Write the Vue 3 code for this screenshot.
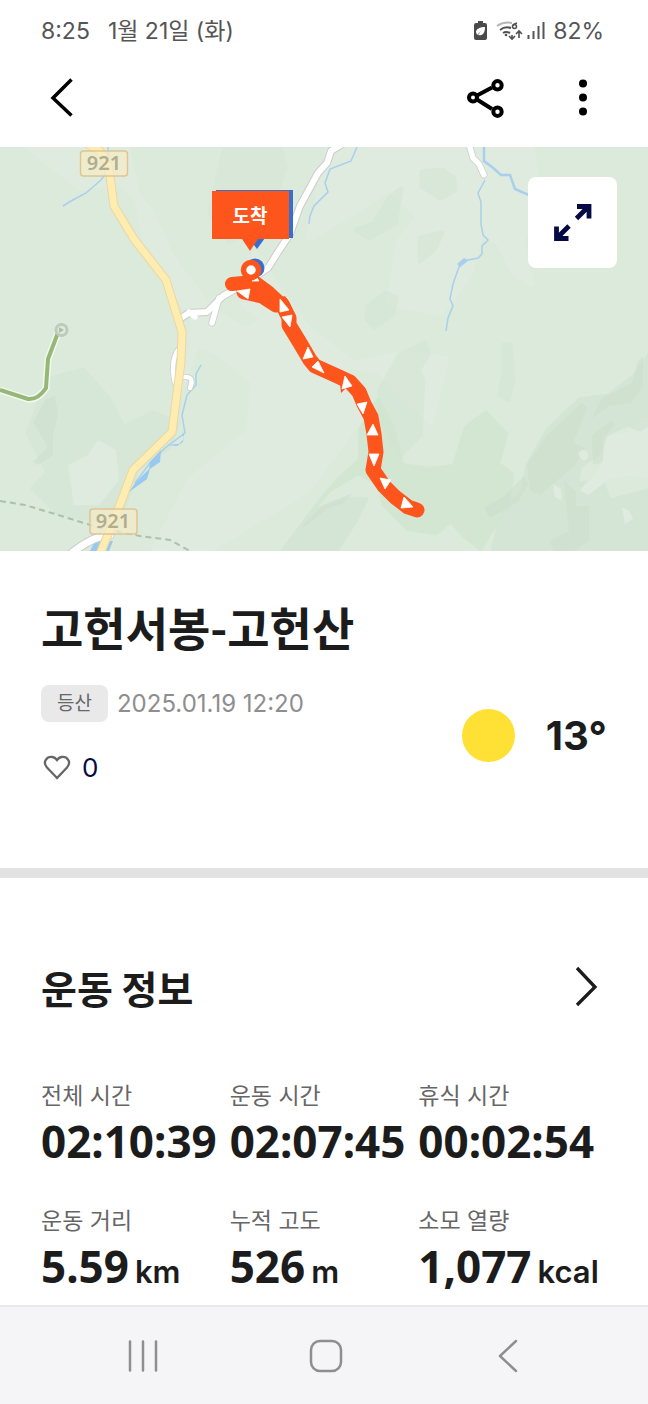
<script setup>
const stats = [
  { label: '전체 시간', value: '02:10:39', unit: '' },
  { label: '운동 시간', value: '02:07:45', unit: '' },
  { label: '휴식 시간', value: '00:02:54', unit: '' },
  { label: '운동 거리', value: '5.59', unit: 'km' },
  { label: '누적 고도', value: '526', unit: 'm' },
  { label: '소모 열량', value: '1,077', unit: 'kcal' },
]
</script>

<template>
  <div class="page">
    <div class="status">
      <div class="status-left"><span>8:25</span><span>1월 21일 (화)</span></div>
      <div class="status-right">
        <svg width="74" height="24" viewBox="472 20 74 24" aria-hidden="true">
          <path d="M478 22h5v2h2q2 0 2 2v13q0 2-2 2h-9q-2 0-2-2V26q0-2 2-2h2z" fill="#4a4a4a" />
          <path d="M485 28c-5 0-9 2-9 5 0 1 1 2 1 3l4-4-3 4c4 1 7-1 7-8z" fill="#fff" />
          <g fill="none" stroke-width="2">
            <path d="M497 27q7-5 15-3" stroke="#b5b5b5" />
            <path d="M500 31q5-4 11-2M503 34q3-2 7 0" stroke="#505050" />
            <path d="M517 24q-4 1-4 3M512 36v4M509 37l3 3 3-3M519 39v-7M516 35l3-3 3 3" stroke="#505050" stroke-width="1.6" />
            <circle cx="514.500" cy="27.500" r="2" stroke="#505050" stroke-width="1.500" />
            <path d="M528.500 36v4M533.500 32v8M538.500 27v13M543.500 23v17" stroke="#555" />
          </g>
          <circle cx="506" cy="36" r="1.300" fill="#505050" />
        </svg>
        <span>82%</span>
      </div>
    </div>

    <header class="appbar">
      <button class="icon-btn" aria-label="뒤로">
        <svg width="40" height="44" viewBox="41 76 40 44"><path d="M71.500 79.500 53 98l18.500 17.500" fill="none" stroke="#000" stroke-width="3.500" /></svg>
      </button>
      <div class="actions">
        <button class="icon-btn" aria-label="공유">
          <svg width="40" height="44" viewBox="466 76 40 44">
            <g fill="none" stroke="#000" stroke-width="4"><path d="m477 95.500 15-8M477 99.500l15 9.500" /><circle cx="473" cy="97.500" r="4" /><circle cx="497.500" cy="85.300" r="4.200" /><circle cx="497.500" cy="111.700" r="4.200" /></g>
          </svg>
        </button>
        <button class="icon-btn" aria-label="더보기">
          <svg width="40" height="44" viewBox="563 76 40 44"><circle cx="583" cy="83.500" r="4" /><circle cx="583" cy="97.500" r="4" /><circle cx="583" cy="111.500" r="4" /></svg>
        </button>
      </div>
    </header>

    <main>
      <section class="map" aria-label="운동 경로">
        <svg viewBox="0 147 648 404" preserveAspectRatio="xMidYMid slice">
          <rect y="147" width="648" height="404" fill="#dbeada" />
          <!-- terrain shading -->
          <g fill="#dfebdf" stroke="#dfebdf" stroke-width="8" stroke-linejoin="round">
            <path d="M30 147h95l15 60 8 45 45 65 2 30-20 55 20-60 25 10 35 30-5 50-60 50-35 69h50l100-60 60-80-30-60-50-40-40 20-35-20-40-55-20-45-30-30-40 5z" />
            <path d="M330 147h200l10 55-20 40 10 40-15-10-15-30-20-10-10 40-30 40-50-10 10-60 20-25-30-30-30 20-50 30z" />
            <path d="M255 255l55 80 45 30 45-10 45 5-15 60-50-50-60-10-45-35-30-20z" />
            <path d="M610 440l20-5 18-15v55l-40-10z" />
          </g>
          <g fill="#d6e6d6" stroke="#d6e6d6" stroke-width="5" stroke-linejoin="round">
            <path d="M48 380l35-10 25 28 15 30 30-15 25 10-10 25-30 20-20 55-60-10-25-25 15-15-20-40z" opacity=".7" />
            <path d="M225 147h55l5 20-15 45-40 30-20-30z" opacity=".5" />
            <path d="M422 172l20-2 12 8 1 12-15 8-18-12zM420 238l22-5-8 16-14 12z" opacity=".7" />
            <path d="M356 230l18-6 15-25 12-10-6 34-25 15zM368 307l18-14 10 5-3 16-18 13-8-8zM504 345h6l3 35-5 20-8-6 4-20z" opacity=".7" />
            <path d="M380 420v-30l20-35 25-12 3 12-10 15 5 10-3 55-20 20z" opacity=".7" />
          </g>
          <g fill="#cfe5d0" stroke="#cfe5d0" stroke-width="4" stroke-linejoin="round" opacity=".75">
            <path d="M313 510l25-30 22-20 0-30 18-30 14 25 10 40 28 4 24-3 12-39 20-14 20 21-8 30 14 10-5 37-16 20-10 18-18-14-12-14-15 12-28-4-24-24-6-22-20-10-30 18z" />
          </g>
          <g fill="#d3e4d4" stroke="#d3e4d4" stroke-width="3" stroke-linejoin="round">
            <path d="M527 465l20-35 32-31 30-4 25-20 14-20v70l-8 5-12-5-22 10-6 18-20 14-2 16 24-3 8 20 38-10v61h-156l10-42 20-16z" opacity=".75" />
            <path d="M282 551l30-40 35-12h20l-10 20-20 32z" opacity=".8" />
          </g>
          <g fill="#c9dccb" opacity=".4">
            <path d="M527 465l20-30 35-32 5 5-14 35 12 5-10 17-35 30-10-5z" />
            <path d="M484 508l20-12 20-20 4 8-10 18-28 16zM564 481l12 10v15h13v35l-15 10h-20l-5-10 20-10z" />
            <path d="M303 525l20-20 30-12-10 10-15 5-25 20z" />
            <path d="M45 400l10-5 3 20-5 20v20l-15 10-5-3 15-15-15-25z" />
            <path d="M592 418l10-20 30-15 6-22 5-5v30l-12 17-22 3zM592 435l20-15 3 5-12 13v25l-10 1z" />
          </g>
          <g fill="#dfebdf">
            <path d="M580 490l18-20 10-20 20-10 20 25-15 10-25 5-20 15zM553 484l8 5 1 12-7-4zM622 507l7 4 4 8-8 5zM578 454q5-8 10 0 0 8-6 6z" />
            <path d="M68 465l20-10 10-15 18 10 3 30-20 25-25 0z" />
          </g>
          <!-- streams -->
          <g fill="none" stroke="#a8d0ec" stroke-width="1.500">
            <path d="M108 147q2 24-7 33l-15 13-15 8-8 5" />
            <path d="M357 147l-6 14-21 8-5 14 3 9-14 14-4 10-1 8" />
            <path d="M485 180l-7 13 3 9 0 22 2 11 5 5-6 6 0 8-4 4-10 2-9 7-6 17-3 15 3 7-5 12-2 13" />
            <path d="M201 365l-5 9 0 11-9 10-5 20 3 18-20 15-15 15-15 20" />
          </g>
          <path d="M484 147l0 14 8 6 9 8 9 0 5 14 14 6 11 9" fill="none" stroke="#a8d0ec" stroke-width="2.500" />
          <path d="M182 431l2 8-5 5-12 1 10 1 6-4 1-7zM161 450l-11 12-1 7-13 13-7 10 18-13 3-10 10-7zM109 551l4-10-7 0-10-2-6 12z" fill="#99c9ee" />
          <path d="M460 267l8-7-4-2-7 6z" fill="#a8d0ec" />
          <!-- minor roads -->
          <g fill="none" stroke-linejoin="round" stroke-linecap="round">
            <g stroke="#cacdca">
              <path d="M344 143l-13 8-4 12-9 10-18 33-10 28-12 18-10 16-25 17-20 11-16 16-18 1-8 5" stroke-width="8" />
              <path d="M219 298l-7 25" stroke-width="7" /><path d="M469 144l4 14 6 6 5 11" stroke-width="7" />
              <path d="M178 350q-8 12-3 33M184 377q11-1 6 11" stroke-width="6" />
              <path d="M68 556q24-20 42-21" stroke-width="9" />
            </g>
            <g stroke="#fff">
              <path d="M344 143l-13 8-4 12-9 10-18 33-10 28-12 18-10 16-25 17-20 11-16 16-18 1-8 5" stroke-width="6" />
              <path d="M219 298l-7 25M189 312l6 5" stroke-width="5.500" /><path d="M469 144l4 14 6 6 5 11" stroke-width="5.500" />
              <path d="M178 350q-8 12-3 33M184 377q11-1 6 11" stroke-width="4.500" />
              <path d="M68 556q24-20 42-21" stroke-width="7" />
            </g>
          </g>
          <path d="M0 501l25 4 30 9 45 14 40 8 30 4 20 11" fill="none" stroke="#abc1aa" stroke-width="2" stroke-dasharray="6 4" />
          <path d="M0 390l28 9q10 1 18-11l2-29 11-29" fill="none" stroke="#f2f8ed" stroke-width="7" />
          <path d="M0 390l28 9q10 1 18-11l2-29 11-29" fill="none" stroke="#95b777" stroke-width="4" />
          <circle cx="61.500" cy="330" r="5.500" fill="#e1e9df" stroke="#bdccba" stroke-width="3" />
          <path d="M59 327v6l5-3z" fill="#abc0a5" />
          <!-- highway -->
          <g fill="none" stroke-linejoin="round">
            <path d="M86 143l14 8q9 12 10 25l4 30 20 33 32 41 16 52-1 30-9 70-39 38-15 40-18 44" stroke="#ead7a2" stroke-width="9" />
            <path d="M86 143l14 8q9 12 10 25l4 30 20 33 32 41 16 52-1 30-9 70-39 38-15 40-18 44" stroke="#ffecb0" stroke-width="7" />
          </g>
          <g fill="#f5ecc6" fill-opacity=".72" stroke="#dec594" stroke-width="1.500">
            <rect x="80.500" y="151" width="47" height="25" rx="3" /><rect x="90" y="509" width="47" height="25" rx="3" />
          </g>
          <g class="road-no"><text x="104" y="170">921</text><text x="113" y="528">921</text></g>
          <!-- recorded track -->
          <circle cx="255" cy="268" r="9.500" fill="#376fce" />
          <path d="M216 190h77v48h-28l-8 11-8-11h-33z" fill="#376fce" />
          <g fill="none" stroke="#fe551c" stroke-linecap="round" stroke-linejoin="round">
            <path d="M232 284l22-2 15 11 15 14" stroke-width="14" /><path d="M244 292l18 4 14 9" stroke-width="15" />
            <path d="M282 304l7 14 0 7 11 18 10 17 5 6 20 9 15 7 9 10 5 12 7 13 3 17 2 18-3 18 11 16 11 11 13 10 9 3" stroke-width="15" />
          </g>
          <path d="M340 383l1 10 5-5zM282 297l3-1 5 8z" fill="#fe551c" />
          <path d="M212 191h77v48h-31l-8 12-8-12h-30z" fill="#fe551c" />
          <g fill="#fff" stroke="#fff" stroke-width=".8">
            <path d="M250 289l-2 10-11-8zM252 281l5-3 2 3zM280 299l9 11-9 2zM282 317l10-2-2 12zM308 347l5 10-10 2zM318 361l6 12-12-6zM345 376l7 10-10 3zM357 404l10-2-4 12zM373 424l5 11h-11zM369 454h10l-5 12zM380 478l11 2-6 9zM404 497l9 10-12 1z" />
          </g>
          <circle cx="251" cy="270" r="7.500" fill="#fff" stroke="#fe551c" stroke-width="5.500" />
          <text class="pin-label" x="250" y="223">도착</text>
        </svg>
        <button class="expand" aria-label="지도 확대">
          <svg width="42" height="42" viewBox="552 202 42 42" fill="none" stroke="#050b42" stroke-width="4.800"><path d="M577 206.500h12v12M588 207l-11.500 11.500M556.500 226.500v12h12M557 238l12-12" /></svg>
        </button>
      </section>

      <section class="summary">
        <h1>고헌서봉-고헌산</h1>
        <div class="summary-row">
          <div>
            <div class="meta"><span class="tag">등산</span><time datetime="2025-01-19T12:20">2025.01.19 12:20</time></div>
            <button class="like" aria-label="좋아요 0">
              <svg width="32" height="32" viewBox="41 751 32 32"><path d="M57 777 47 766.500C42 761 47 755 52.500 756q2.500.4 4.500 3 2-2.600 4.500-3c5.500-1 10.500 5 5.500 10.500z" fill="none" stroke="#666" stroke-width="2.300" /></svg>
              <span>0</span>
            </button>
          </div>
          <div class="weather"><i class="sun"></i><span>13°</span></div>
        </div>
      </section>

      <section class="info">
        <div class="info-head">
          <h2>운동 정보</h2>
          <button class="icon-btn" aria-label="운동 정보 더보기">
            <svg width="40" height="44" viewBox="567 966 40 44"><path d="m577 969 18 19-18 18" fill="none" stroke="#1c1c1c" stroke-width="3.300" /></svg>
          </button>
        </div>
        <dl class="stats">
          <div v-for="s in stats" :key="s.label" class="stat">
            <dt>{{ s.label }}</dt>
            <dd>{{ s.value }}<span v-if="s.unit" class="unit">{{ s.unit }}</span></dd>
          </div>
        </dl>
      </section>
    </main>

    <nav class="sysnav">
      <button aria-label="최근 앱"><svg width="40" height="40" viewBox="0 0 40 40"><path d="M6 5.500v29M19 5.500v29M32 5.500v29" /></svg></button>
      <button aria-label="홈"><svg width="40" height="40" viewBox="0 0 40 40"><rect x="5" y="5" width="30" height="30" rx="9" /></svg></button>
      <button aria-label="이전"><svg width="40" height="40" viewBox="0 0 40 40"><path d="M28 5 12 20l16 15" /></svg></button>
    </nav>
  </div>
</template>

<style>
body { margin: 0; background: #fff; }
</style>

<style scoped>
.page { min-height: 100vh; display: flex; flex-direction: column; background: #fff; color: #1c1c1c; font-family: Inter, "Noto Sans CJK KR", sans-serif; }
button { border: 0; padding: 0; background: none; color: inherit; font: inherit; cursor: pointer; }
svg { display: block; }
h1, h2, dl, dd { margin: 0; }
.status { display: flex; justify-content: space-between; padding: 14px 44px 0 41px; height: 34px; line-height: 34px; font-size: 23px; color: #555; }
.status-left { display: flex; gap: 18px; }
.status-right { display: flex; align-items: center; gap: 7px; }
.appbar { height: 99px; display: flex; align-items: center; justify-content: space-between; padding: 0 45px 0 41px; }
.actions { display: flex; gap: 57px; }
main { flex: 1; }
.map { position: relative; }
.map > svg { width: 100%; height: auto; }
.road-no { font: 600 20px "Noto Sans", sans-serif; fill: #b0ad90; text-anchor: middle; }
.pin-label { font: 700 19px "Noto Sans CJK KR", sans-serif; fill: #fff; text-anchor: middle; }
.expand { position: absolute; top: 30px; right: 31px; width: 89px; height: 91px; border-radius: 8px; background: #fff; display: grid; place-items: center; }
.summary { padding: 40px 41px 83px; border-bottom: 10px solid #e2e2e2; }
h1 { font: 700 46px/70px "Noto Sans CJK KR", sans-serif; }
.summary-row { display: flex; justify-content: space-between; align-items: center; margin-top: 24px; }
.meta { display: flex; align-items: center; gap: 9px; color: #8e8e8e; font-size: 24px; }
.tag { padding: 0 16px; line-height: 37px; border-radius: 8px; background: #e9e9e9; color: #666; font-size: 19px; }
.like { display: flex; align-items: center; gap: 9px; margin-top: 28px; line-height: 35px; font-size: 26px; color: #050b42; }
.weather { display: flex; align-items: center; gap: 31px; font-size: 40px; font-weight: 700; }
.sun { width: 53px; height: 53px; border-radius: 50%; background: #ffe135; }
.info { padding: 79px 41px 6px; }
.info-head { display: flex; align-items: center; justify-content: space-between; height: 60px; }
h2 { font: 700 39px/60px "Noto Sans CJK KR", sans-serif; }
.stats { display: grid; grid-template-columns: repeat(3, 1fr); margin-top: 61px; row-gap: 35px; }
dt { font-size: 23px; line-height: 36px; color: #666; }
dd { font: 700 44px/54px "Noto Sans", sans-serif; white-space: nowrap; }
.unit { margin-left: 6px; font: 600 31px/40px Inter, sans-serif; }
.sysnav { box-sizing: border-box; display: flex; align-items: center; height: 99px; padding: 0 49px 0 53px; background: #f5f5f7; border-top: 2px solid #e9e9eb; }
.sysnav button { flex: 1; display: grid; place-items: center; }
.sysnav svg { fill: none; stroke: #8e8e8e; stroke-width: 2.5; stroke-linecap: round; stroke-linejoin: round; }
</style>
